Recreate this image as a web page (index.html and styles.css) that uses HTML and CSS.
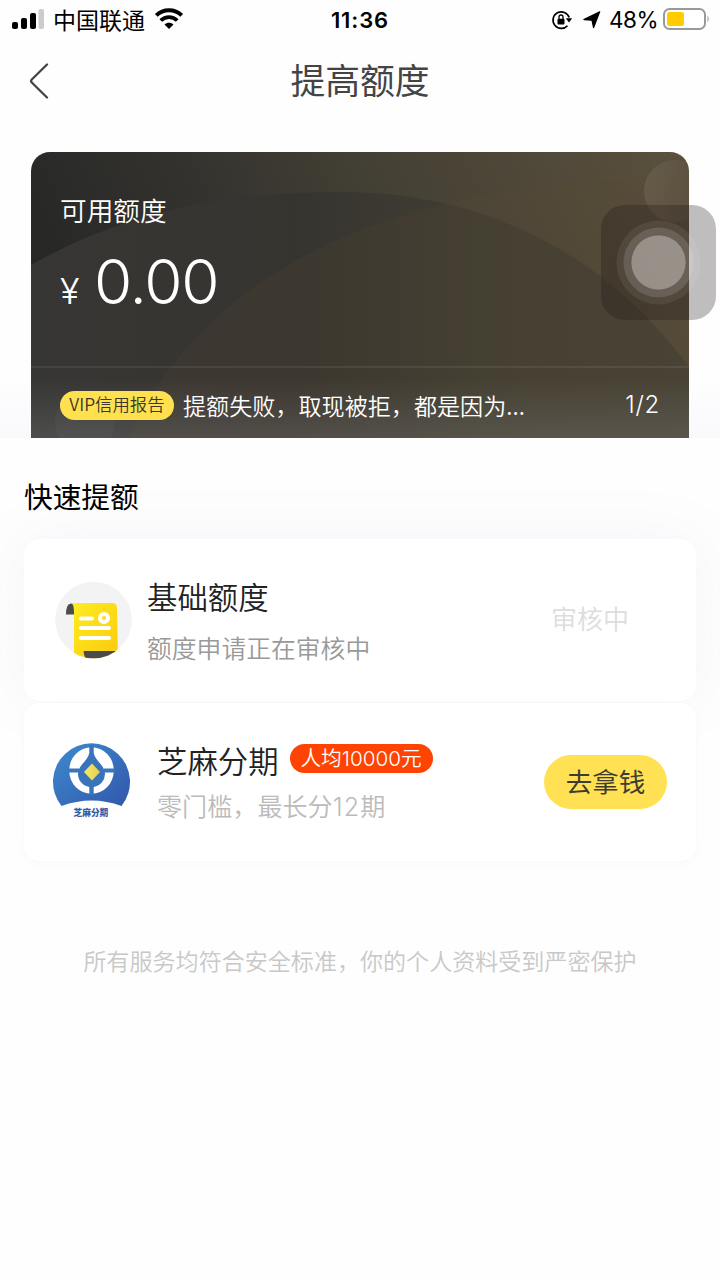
FILE: index.html
```html
<!DOCTYPE html>
<html lang="zh-CN">
<head>
<meta charset="utf-8">
<title>提高额度</title>
<link rel="stylesheet" href="styles.css">
</head>
<body>
<main class="screen">
  <header class="status">
    <div class="status-left">
      <svg class="signal" width="33" height="22" viewBox="0 0 33 22"><rect x="0" y="13" width="6" height="7" rx="2"/><rect x="9" y="9" width="6" height="11" rx="2"/><rect x="18" y="4" width="6" height="16" rx="2"/><rect x="26.500" y="0" width="5.500" height="20" rx="2" fill="#ccc"/></svg>
      <span class="carrier">中国联通</span>
      <svg class="wifi" width="30" height="22" viewBox="0 0 30 22" fill="none" stroke="#000"><path d="M2.300 7.300C9.200.5 20.800.5 27.700 7.300" stroke-width="4"/><path d="M6.800 12.500C11.500 8 18.500 8 23.200 12.500" stroke-width="3.800"/><path d="M10.500 16.600C13 14.200 17 14.200 19.500 16.600L15 21Z" fill="#000" stroke="none"/></svg>
    </div>
    <span class="time">11:36</span>
    <div class="status-right">
      <svg class="lock" width="22" height="22" viewBox="0 0 22 22"><path d="M16.500 16.700A8.300 8.300 0 1 1 18.200 8.500" fill="none" stroke="#000" stroke-width="1.700"/><path d="M14.800 9.300h6.400L18 13.500Z"/><rect x="6.500" y="9.800" width="7" height="5.700" rx="1"/><path d="M8 10.500V8a2 2 0 0 1 4 0V10.500" fill="none" stroke="#000" stroke-width="1.300"/></svg>
      <svg class="arrow" width="18" height="18" viewBox="0 0 18 18"><path d="M17.300.7L11.300 16.500c-.4.900-1.200.8-1.400-.1L8.500 9.800 1.200 9.200c-1.100-.1-1.200-1-.2-1.400L16.500.3c.7-.3 1-.1.800.4Z"/></svg>
      <span class="percent">48%</span>
      <svg class="battery" width="47" height="22" viewBox="0 0 47 22"><rect x="1" y="1" width="41" height="20" rx="5.500" fill="#fff" stroke="#999" stroke-width="2"/><rect x="4" y="4" width="17" height="14" rx="2.500" fill="#fc0"/><path d="M44.500 7.500q2.500 3.500 0 7Z" fill="#999"/></svg>
    </div>
  </header>
  <nav class="navbar">
    <svg class="back" width="20" height="36" viewBox="0 0 20 36"><path d="M18 1.500L2.800 16.500q-1.500 1.500 0 3L18 34.500" fill="none" stroke="#444" stroke-width="2.300" stroke-linecap="round"/></svg>
    <h1 class="title">提高额度</h1>
  </nav>
  <section class="hero">
    <div class="credit">
      <svg class="credit-art" width="658" height="286" viewBox="0 0 658 286">
        <defs>
          <linearGradient id="base" x1="0" y1=".2" x2="1" y2="0"><stop offset="0" stop-color="#282827"/><stop offset=".25" stop-color="#33322e"/><stop offset=".55" stop-color="#454135"/><stop offset="1" stop-color="#5b503d"/></linearGradient>
          <linearGradient id="hill"><stop offset="0" stop-color="#363634"/><stop offset=".4" stop-color="#36342f"/><stop offset=".75" stop-color="#434034"/><stop offset="1" stop-color="#464236"/></linearGradient>
          <linearGradient id="fade" x1="0" y1="0" x2="0" y2="1"><stop offset="0" stop-color="#777" stop-opacity="0"/><stop offset="1" stop-color="#777" stop-opacity=".36"/></linearGradient>
          <linearGradient id="moon"><stop offset="0" stop-color="#fff" stop-opacity=".08"/><stop offset="1" stop-color="#fff" stop-opacity="0"/></linearGradient>
        </defs>
        <rect width="658" height="286" fill="url(#base)"/>
        <path d="M0 113C90 62 190 40 310 40C460 40 580 108 658 215V286H0Z" fill="url(#hill)"/>
        <path d="M110 260C190 120 350 28 658 25V286H100Z" fill="#5c4832" opacity=".16"/>
        <circle cx="644" cy="39" r="31" fill="url(#moon)"/>
        <circle cx="54" cy="270" r="30" fill="#fff" opacity=".04"/>
        <rect y="226" width="658" height="60" fill="url(#fade)"/>
        <path d="M0 215H658" stroke="#fff" stroke-opacity=".07" stroke-width="2"/>
      </svg>
      <div class="credit-main">
        <p class="credit-label">可用额度</p>
        <p class="amount"><span class="currency">¥</span><span class="number">0.00</span></p>
      </div>
      <div class="notice">
        <span class="vip">VIP信用报告</span>
        <span class="notice-text">提额失败，取现被拒，都是因为...</span>
        <span class="pager">1/2</span>
      </div>
    </div>
  </section>
  <section class="offers">
    <h2 class="section-title">快速提额</h2>
    <div class="cards">
      <article class="card card-basic">
        <svg class="doc-icon" width="78" height="78" viewBox="0 0 78 78">
          <defs><linearGradient id="paper" x1="0" y1="0" x2="1" y2="1"><stop offset="0" stop-color="#ffed22"/><stop offset="1" stop-color="#fbc90d"/></linearGradient><clipPath id="disc"><circle cx="38.500" cy="39" r="38.300"/></clipPath></defs>
          <circle cx="38.500" cy="39" r="38.300" fill="#f3f3f3"/>
          <g clip-path="url(#disc)"><path d="M11 33.500Q11 22.500 16 22.500H20V33.500Z" fill="#4b4b4b"/><path d="M16 22H57q5 0 5 5L63 78H19V31q0-8-3-9Z" fill="url(#paper)"/><path d="M28.500 70H64V80H32q-3-4-3.500-10Z" fill="#4b4b4b"/></g>
          <path d="M26 37.500H37M26 47H54M26 57H54" stroke="#fff" stroke-width="4" stroke-linecap="round"/>
          <circle cx="49" cy="37" r="4" fill="none" stroke="#fff" stroke-width="4"/>
        </svg>
        <div class="copy"><h3 class="card-title">基础额度</h3><p class="card-text">额度申请正在审核中</p></div>
        <span class="state">审核中</span>
      </article>
      <article class="card card-zhima">
        <svg class="zhima-icon" width="78" height="78" viewBox="0 0 78 78">
          <defs><linearGradient id="blue" x1="0" y1="0" x2="1" y2="1"><stop offset="0" stop-color="#3d8bd0"/><stop offset="1" stop-color="#3257aa"/></linearGradient><linearGradient id="gold"><stop offset="0" stop-color="#f7e96b"/><stop offset="1" stop-color="#e5cf4d"/></linearGradient></defs>
          <path d="M8.500 64A38.500 38.500 0 1 1 68.500 64Q38.500 53 8.500 64Z" fill="url(#blue)"/>
          <ellipse cx="38.500" cy="28.500" rx="22.300" ry="23.200" fill="#fff"/>
          <path d="M36.300 3h4.400V11C42 19 52 23 52 32A13.300 13.300 0 0 1 40.700 45V53H36.300V45A13.300 13.300 0 0 1 25 32C25 23 35 19 36.300 11Z" fill="#3973ba"/>
          <path d="M15 28.500H26M51 28.500H62" stroke="#3976bd" stroke-width="4"/>
          <path d="M39 21.500L47 30L39 38.500L31 30Z" fill="url(#gold)"/>
          <text x="20.500" y="73.500" class="logo-text">芝麻分期</text>
        </svg>
        <div class="copy"><div class="title-row"><h3 class="card-title">芝麻分期</h3><span class="average">人均<span class="digits">10000</span>元</span></div><p class="card-text">零门槛，最长分<span class="digits count">12</span>期</p></div>
        <button class="action">去拿钱</button>
      </article>
    </div>
  </section>
  <footer class="footer">所有服务均符合安全标准，你的个人资料受到严密保护</footer>
  <div class="assistive">
    <svg width="115" height="115" viewBox="0 0 115 115"><rect width="115" height="115" rx="24" fill="#1d1515" fill-opacity=".28"/><circle cx="57.500" cy="57.500" r="42" fill="#fff" fill-opacity=".07"/><circle cx="57.500" cy="57.500" r="35" fill="#fff" fill-opacity=".13"/><circle cx="57.500" cy="57.500" r="27.500" fill="#c5c1bc" fill-opacity=".5" stroke="#50493d" stroke-opacity=".4"/></svg>
  </div>
</main>
</body>
</html>
```
FILE: styles.css
```css
* { box-sizing: border-box; }
body { margin: 0; background: #fefefe; color: #222; font-family: "Noto Sans CJK SC", "Noto Sans", sans-serif; font-weight: 350; }
h1, h2, h3, p { margin: 0; font-weight: 350; }
svg { display: block; flex: none; }
.screen { position: relative; width: 720px; height: 1280px; overflow: hidden; }
.status { display: grid; grid-template-columns: 1fr auto 1fr; align-items: center; height: 40px; padding: 0 10px 0 12px; color: #000; }
.status-left, .status-right { display: flex; align-items: center; }
.status-right { justify-content: flex-end; }
.carrier { margin-left: 8px; font-size: 23px; line-height: 36px; font-weight: 400; padding-bottom: 3px; }
.wifi { margin-left: 9px; margin-bottom: 2px; }
.time { font: 600 22px/40px Inter, sans-serif; letter-spacing: .9px; padding-right: 2px; }
.arrow { margin-left: 10px; }
.percent { margin-left: 8px; font: 400 22.5px/40px Inter, sans-serif; letter-spacing: -.5px; }
.battery { margin-left: 5px; margin-bottom: 2px; }
.navbar { display: grid; grid-template-columns: 260px 200px 260px; align-items: center; height: 82px; }
.back { margin-left: 29px; }
.title { text-align: center; font-size: 34.8px; line-height: 78px; font-weight: 400; color: #444; padding-bottom: 4px; }
.hero { height: 316px; padding: 30px 31px 0; background: linear-gradient(#fefefe 80%, #f9f9fc); }
.credit { position: relative; height: 286px; overflow: hidden; border-radius: 19px 19px 0 0; color: #fff; }
.credit-art { position: absolute; inset: 0; }
.credit-main { position: relative; height: 215px; padding: 38px 29px 0; }
.credit-label { font-size: 26.7px; line-height: 40px; }
.amount { display: flex; align-items: baseline; height: 80px; margin-top: 12px; font-family: Inter, sans-serif; }
.currency { width: 34px; font-size: 36px; }
.number { font-size: 62px; line-height: 80px; letter-spacing: -1.2px; }
.notice { position: relative; display: flex; align-items: center; height: 71px; padding: 6px 29px 0; }
.vip { width: 114px; height: 29px; border-radius: 15px; background: #ffe14f; color: #3c3829; text-align: center; font-size: 17.4px; line-height: 26px; white-space: nowrap; }
.notice-text { margin-left: 9px; padding-bottom: 2px; font-size: 23.1px; line-height: 32px; white-space: nowrap; }
.pager { margin-left: auto; padding-bottom: 2px; font: 300 24px/30px Inter, sans-serif; letter-spacing: .7px; }
.offers { padding: 38px 24px 0; }
.section-title { font-size: 28.7px; line-height: 40px; color: #000; font-weight: 400; }
.cards { display: grid; gap: 2px; margin-top: 23px; }
.card { display: flex; align-items: center; background: #fff; border-radius: 16px; }
.card-basic { height: 162px; padding: 0 66px 0 31px; box-shadow: 0 0 60px rgba(110, 110, 180, .08); }
.card-zhima { position: relative; height: 158px; padding: 0 29px 0 29px; box-shadow: 0 3px 7px rgba(100, 100, 150, .035); }
.copy { flex: 1; }
.card-basic .copy { margin-left: 14px; padding-bottom: 2px; }
.card-title { font-size: 30.4px; line-height: 44px; }
.card-text { font-size: 24.8px; line-height: 36px; margin-top: 11px; color: #999; }
.state { margin-right: 1px; font-size: 26px; line-height: 40px; color: #ddd; padding-bottom: 4px; }
.zhima-icon { margin-bottom: 2px; }
.logo-text { font: 900 8.700px "Noto Sans CJK SC", sans-serif; fill: #315ca5; }
.card-zhima .copy { margin-left: 26px; padding-bottom: 2px; }
.title-row { display: flex; align-items: center; gap: 11px; }
.average { width: 143px; height: 29px; margin-bottom: 2px; border-radius: 15px; background: #ff4302; color: #fff; text-align: center; font-size: 20.7px; line-height: 26px; white-space: nowrap; }
.digits { font-family: Inter, sans-serif; font-weight: 300; }
.count { letter-spacing: 1.1px; }
.card-zhima .card-text { margin-top: 5px; font-size: 25.1px; line-height: 36px; color: #bbb; }
.action { width: 123px; height: 54px; padding: 0 0 3px; border: 0; border-radius: 27px; background: #ffe153; color: #3d3c31; font: 400 26.5px/51px "Noto Sans CJK SC", sans-serif; }
.footer { margin-top: 79px; text-align: center; font-size: 23.05px; line-height: 40px; color: #c8c8c8; }
.assistive { position: absolute; left: 601px; top: 205px; }
```
